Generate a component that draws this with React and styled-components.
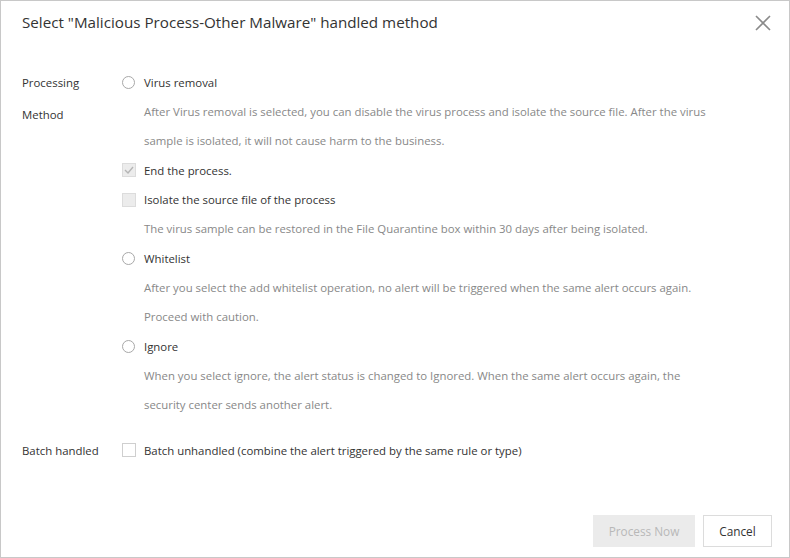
import React from 'react';
import styled, { createGlobalStyle } from 'styled-components';

const GlobalStyle = createGlobalStyle`
  html, body {
    margin: 0;
    padding: 0;
    background: #fff;
  }
  body {
    font-family: "Open Sans", "Noto Sans", sans-serif;
    color: #333;
  }
`;

const Dialog = styled.div`
  width: 790px;
  height: 558px;
  box-sizing: border-box;
  border: 1px solid #c8c8c8;
  display: flex;
  flex-direction: column;
  background: #fff;
`;

const Header = styled.div`
  height: 42px;
  display: flex;
  align-items: center;
  justify-content: space-between;
  padding: 0 17px 0 21px;
`;

const Title = styled.h2`
  margin: 0;
  font-size: 15.2px;
  font-weight: 400;
  color: #333;
`;

const CloseButton = styled.button`
  border: none;
  background: none;
  padding: 0;
  width: 18px;
  height: 18px;
  margin-top: 1px;
  cursor: pointer;
  display: flex;
  align-items: center;
  justify-content: center;
`;

const Body = styled.div`
  flex: 1;
  padding: 24px 21px 0 21px;
`;

const FormRow = styled.div`
  display: flex;
  margin-top: ${(p) => p.$gap || 0}px;
`;

const Label = styled.div`
  width: 90px;
  margin-right: 10px;
  font-size: 11.4px;
  line-height: 32px;
  color: #333;
  flex-shrink: 0;
`;

const Options = styled.div`
  flex: 1;
`;

const Option = styled.label`
  display: flex;
  align-items: center;
  height: ${(p) => p.$h || 30}px;
  font-size: 11.4px;
  color: #333;
  cursor: pointer;
`;

const Radio = styled.span`
  width: 13px;
  height: 13px;
  border: 1px solid #a8a8a8;
  border-radius: 50%;
  box-sizing: border-box;
  margin-right: 9px;
  flex-shrink: 0;
`;

const Check = styled.span`
  width: 14px;
  height: 14px;
  box-sizing: border-box;
  border: 1px solid ${(p) => (p.$disabled ? '#dcdcdc' : '#cfcfcf')};
  background: ${(p) => (p.$disabled ? '#ececec' : '#fff')};
  margin-right: 8px;
  flex-shrink: 0;
  display: flex;
  align-items: center;
  justify-content: center;
`;

const Desc = styled.p`
  margin: 0;
  padding-left: 22px;
  font-size: 11.4px;
  line-height: 29px;
  color: #888;
  max-width: 570px;
`;

const Footer = styled.div`
  display: flex;
  justify-content: flex-end;
  gap: 8px;
  padding: 0 17px 10px 0;
`;

const Button = styled.button`
  height: 32px;
  width: ${(p) => p.$w}px;
  padding: 0;
  font-family: inherit;
  font-size: 11.8px;
  border: 1px solid ${(p) => (p.$disabled ? '#ebebeb' : '#dcdcdc')};
  background: ${(p) => (p.$disabled ? '#ebebeb' : '#fff')};
  color: ${(p) => (p.$disabled ? '#b8b8b8' : '#333')};
  cursor: ${(p) => (p.$disabled ? 'not-allowed' : 'pointer')};
`;

const CheckMark = () => (
  <svg width="10" height="8" viewBox="0 0 10 8">
    <path d="M1 4 L4 7 L9 1" fill="none" stroke="#b5b5b5" strokeWidth="1.4" />
  </svg>
);

export default function App() {
  return (
    <>
      <GlobalStyle />
      <Dialog>
        <Header>
          <Title>Select "Malicious Process-Other Malware" handled method</Title>
          <CloseButton aria-label="close">
            <svg width="16" height="16" viewBox="0 0 16 16">
              <path d="M1 1 L15 15 M15 1 L1 15" stroke="#8a8a8a" strokeWidth="1.6" />
            </svg>
          </CloseButton>
        </Header>
        <Body>
          <FormRow>
            <Label>Processing Method</Label>
            <Options>
              <Option>
                <Radio />
                Virus removal
              </Option>
              <Desc>
                After Virus removal is selected, you can disable the virus process and isolate the source file. After the virus sample is isolated, it will not cause harm to the business.
              </Desc>
              <Option>
                <Check $disabled>
                  <CheckMark />
                </Check>
                End the process.
              </Option>
              <Option $h={29}>
                <Check $disabled />
                Isolate the source file of the process
              </Option>
              <Desc>
                The virus sample can be restored in the File Quarantine box within 30 days after being isolated.
              </Desc>
              <Option>
                <Radio />
                Whitelist
              </Option>
              <Desc>
                After you select the add whitelist operation, no alert will be triggered when the same alert occurs again. Proceed with caution.
              </Desc>
              <Option>
                <Radio />
                Ignore
              </Option>
              <Desc>
                When you select ignore, the alert status is changed to Ignored. When the same alert occurs again, the security center sends another alert.
              </Desc>
            </Options>
          </FormRow>
          <FormRow $gap={16}>
            <Label>Batch handled</Label>
            <Options>
              <Option>
                <Check />
                Batch unhandled (combine the alert triggered by the same rule or type)
              </Option>
            </Options>
          </FormRow>
        </Body>
        <Footer>
          <Button $disabled $w={102}>Process Now</Button>
          <Button $w={69}>Cancel</Button>
        </Footer>
      </Dialog>
    </>
  );
}
